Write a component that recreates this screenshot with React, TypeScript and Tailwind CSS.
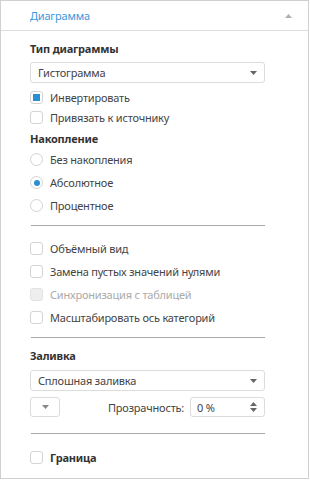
import React from 'react';

const font = { fontFamily: '"Noto Sans", "Open Sans", sans-serif' };

const Caret = ({ className = '' }: { className?: string }) => (
  <svg width="7" height="4" viewBox="0 0 7 4" className={className}>
    <path d="M0 0h7L3.5 4z" fill="currentColor" />
  </svg>
);

const CheckBox = ({
  label,
  checked = false,
  disabled = false,
  bold = false,
  short = false,
}: {
  label: string;
  checked?: boolean;
  disabled?: boolean;
  bold?: boolean;
  short?: boolean;
}) => (
  <div className={`flex items-center gap-[7px] ${short ? 'h-[20px]' : 'h-[23px]'}`}>
    <span
      className={`flex size-[13px] shrink-0 items-center justify-center rounded-[3px] border ${
        disabled ? 'border-[#e2e2e2] bg-[#eeeeee]' : 'border-[#d4d4d4] bg-white'
      }`}
    >
      {checked && <span className="size-[7px] bg-[#2b8fd6]" />}
    </span>
    <span
      className={`text-[11px] leading-none tracking-[-0.2px] ${
        disabled ? 'text-[#aaaaaa]' : bold ? 'font-bold text-[#333]' : 'text-[#444]'
      }`}
    >
      {label}
    </span>
  </div>
);

const Radio = ({ label, checked = false }: { label: string; checked?: boolean }) => (
  <div className="flex h-[23px] items-center gap-[7px]">
    <span className="flex size-[13px] shrink-0 items-center justify-center rounded-full border border-[#d4d4d4] bg-white">
      {checked && <span className="size-[6px] rounded-full bg-[#2b8fd6]" />}
    </span>
    <span className="text-[11px] leading-none tracking-[-0.2px] text-[#444]">{label}</span>
  </div>
);

const Select = ({ value }: { value: string }) => (
  <div className="flex h-[21px] items-center justify-between rounded-[3px] border border-[#dcdcdc] bg-white pl-[7px] pr-[7px]">
    <span className="text-[11px] leading-none tracking-[-0.2px] text-[#444]">{value}</span>
    <Caret className="text-[#666]" />
  </div>
);

const Title = ({ children }: { children: React.ReactNode }) => (
  <div className="flex h-[16px] items-center text-[11px] font-bold leading-none tracking-[-0.2px] text-[#333]">
    {children}
  </div>
);

const Sep = ({ className = '' }: { className?: string }) => (
  <div className={`h-px bg-[#a8a8a8] ${className}`} />
);

export default function App() {
  return (
    <div style={font} className="h-[480px] w-[310px] bg-white">
      <div className="flex h-[479px] w-[309px] flex-col border border-[#d0d0d0]">
        {/* Header */}
        <div className="flex h-[30px] shrink-0 items-center justify-between border-b border-[#dcdcdc] pl-[29px] pr-[16px]">
          <span className="text-[11px] leading-none tracking-[-0.2px] text-[#3a98dc]">Диаграмма</span>
          <Caret className="rotate-180 text-[#b0b0b0]" />
        </div>

        <div className="flex flex-col pl-[29px] pr-[43px] pt-[9px]">
          <Title>Тип диаграммы</Title>
          <div className="mt-[6px]">
            <Select value="Гистограмма" />
          </div>
          <div className="mt-[4px] flex flex-col">
            <CheckBox label="Инвертировать" checked short />
            <CheckBox label="Привязать к источнику" short />
          </div>
          <div className="mt-[3px]">
            <Title>Накопление</Title>
          </div>
          <div className="mt-[2px] flex flex-col">
            <Radio label="Без накопления" />
            <Radio label="Абсолютное" checked />
            <Radio label="Процентное" />
          </div>
          <Sep className="ml-[1px] mt-[8px]" />

          <div className="mt-[11px] flex flex-col">
            <CheckBox label="Объёмный вид" />
            <CheckBox label="Замена пустых значений нулями" />
            <CheckBox label="Синхронизация с таблицей" disabled />
            <CheckBox label="Масштабировать ось категорий" />
          </div>
          <Sep className="ml-[1px] mt-[8px]" />

          <div className="mt-[9px]">
            <Title>Заливка</Title>
          </div>
          <div className="mt-[7px]">
            <Select value="Сплошная заливка" />
          </div>
          <div className="mt-[6px] flex h-[20px] items-center">
            <div className="flex h-[20px] w-[30px] items-center justify-center rounded-[3px] border border-[#dcdcdc]">
              <Caret className="text-[#888]" />
            </div>
            <span className="ml-auto text-[11px] leading-none tracking-[-0.2px] text-[#444]">Прозрачность:</span>
            <div className="ml-[6px] flex h-[20px] w-[75px] items-center justify-between rounded-[3px] border border-[#dcdcdc] pl-[6px] pr-[7px]">
              <span className="text-[11px] leading-none tracking-[-0.2px] text-[#444]">0 %</span>
              <div className="flex flex-col gap-[2px]">
                <Caret className="rotate-180 text-[#666]" />
                <Caret className="text-[#666]" />
              </div>
            </div>
          </div>
          <Sep className="ml-[1px] mt-[16px]" />

          <div className="mt-[12px]">
            <CheckBox label="Граница" bold />
          </div>
        </div>
      </div>
    </div>
  );
}
